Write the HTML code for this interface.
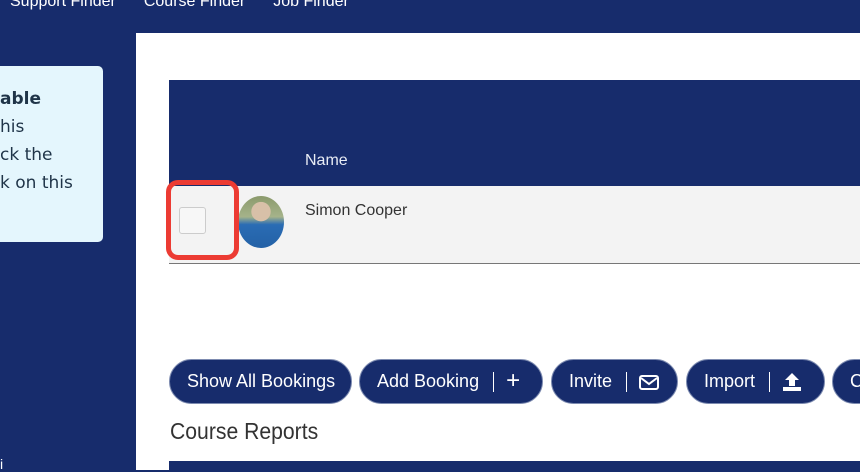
<!DOCTYPE html>
<html><head><style>
body{margin:0;width:860px;height:470px;overflow:hidden;background:#172c6c;font-family:"Liberation Sans",sans-serif;position:relative}
.a{position:absolute}
.nav{top:-7px;left:10px;color:#fff;font-size:16px;white-space:nowrap}
.nav span{margin-right:28px}
.btn{position:absolute;top:359px;height:45px;border-radius:23px;background:#172c6c;color:#fff;font-family:"Liberation Sans Narrow","Liberation Sans",sans-serif;font-size:18px;line-height:43px;box-sizing:border-box;padding:0 17px;white-space:nowrap;border:1px solid #7d8bb0}
.sep{display:inline-block;width:1px;height:20px;background:#fff;vertical-align:middle;margin:0 12px 0 14px}
</style></head><body>
<div class="a nav"><span>Support Finder</span><span>Course Finder</span><span>Job Finder</span></div>
<div class="a" style="left:-10px;top:66px;width:113px;height:176px;background:#e4f6fd;border-radius:5px"></div>
<div class="a" style="left:0;top:85px;color:#1f3448;font-size:17px;line-height:28px;font-family:'DejaVu Sans',sans-serif;white-space:nowrap">
<div style="font-weight:bold">able</div><div>his</div><div>ck the</div><div>k on this</div></div>
<div class="a" style="left:0;top:456px;color:#fff;font-size:14px">i</div>
<div class="a" style="left:136px;top:33px;width:724px;height:437px;background:#fff"></div>
<div class="a" style="left:169px;top:80px;width:691px;height:106px;background:#172c6c"></div>
<div class="a" style="left:305px;top:152px;color:#e8ecf5;font-size:16px">Name</div>
<div class="a" style="left:169px;top:186px;width:691px;height:77px;background:#f3f3f3;border-bottom:1px solid #777"></div>
<div class="a" style="left:305px;top:202px;color:#333;font-size:16px">Simon Cooper</div>
<div class="a" style="left:238px;top:196px;width:46px;height:52px;border-radius:50%;background:radial-gradient(circle at 50% 30%,#d8c0a8 0 22%,transparent 23%),linear-gradient(#8b9a6c 0,#a5b38a 40%,#2a6cb4 55%,#2361a6 100%)"></div>
<div class="a" style="left:166px;top:180px;width:73px;height:80px;border:5px solid #ec3b33;border-radius:12px;box-sizing:border-box"></div>
<div class="a" style="left:179px;top:207px;width:25px;height:25px;border:1px solid #ccc;border-radius:3px;background:#f7f7f7"></div>
<div class="btn" style="left:169px;width:183px">Show All Bookings</div>
<div class="btn" style="left:359px;width:184px">Add Booking<span class="sep"></span><span style="font-size:24px;line-height:20px;vertical-align:-1px">+</span></div>
<div class="btn" style="left:551px;width:127px">Invite<span class="sep"></span><svg width="20" height="15" viewBox="0 0 20 15" style="vertical-align:middle"><rect x="1" y="1" width="18" height="13" rx="2" fill="none" stroke="#fff" stroke-width="2"/><path d="M2 3l8 6 8-6" fill="none" stroke="#fff" stroke-width="2"/></svg></div>
<div class="btn" style="left:686px;width:139px">Import<span class="sep"></span><svg width="20" height="20" viewBox="0 0 20 20" style="vertical-align:middle"><path d="M10 1l7 7h-4v6H7V8H3z" fill="#fff"/><rect x="1" y="15" width="18" height="4" fill="#fff"/></svg></div>
<div class="btn" style="left:832px;width:60px">C</div>
<div class="a" style="left:170px;top:418px;color:#333;font-size:23px;font-family:'Liberation Sans Narrow','Liberation Sans',sans-serif;transform:scaleX(0.92);transform-origin:left">Course Reports</div>
<div class="a" style="left:169px;top:461px;width:691px;height:9px;background:#172c6c"></div>
</body></html>
